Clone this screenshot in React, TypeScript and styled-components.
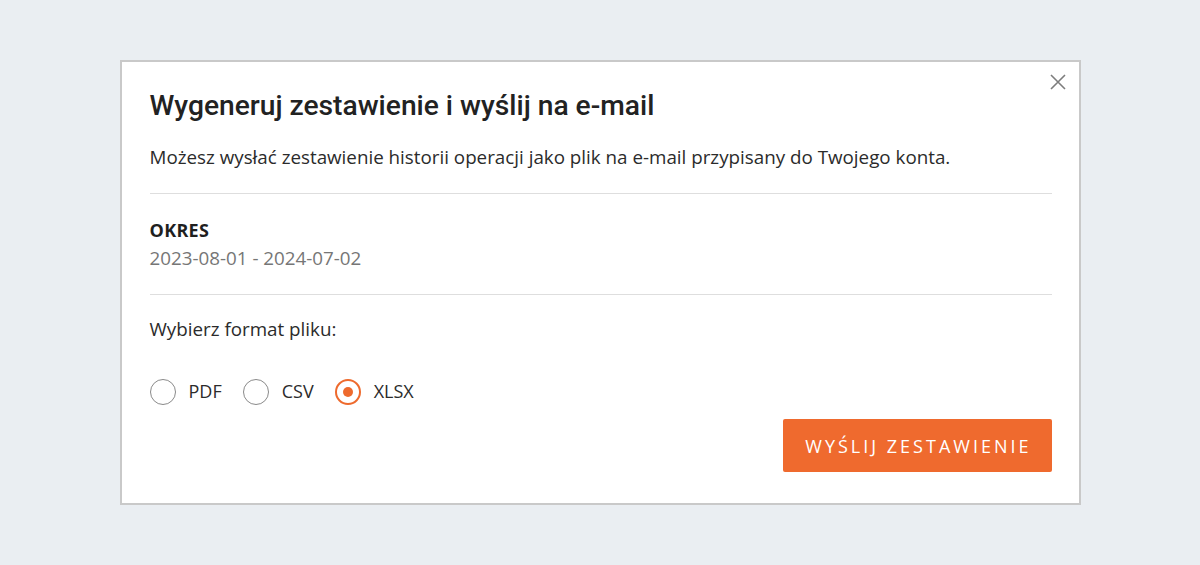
import React, { useState } from "react";
import styled, { createGlobalStyle } from "styled-components";

const GlobalStyle = createGlobalStyle`
  html, body {
    margin: 0;
    padding: 0;
    background: #eaeef2;
  }
  body {
    font-family: "Open Sans", "Liberation Sans", sans-serif;
    color: #2b2b2b;
  }
`;

const Page = styled.div`
  height: 565px;
  display: flex;
  align-items: center;
  justify-content: center;
`;

const Dialog = styled.div`
  position: relative;
  box-sizing: border-box;
  width: 961px;
  background: #fff;
  border: 2px solid #c9c9c9;
  padding: 27px 27px 31px 28px;
`;

const CloseButton = styled.button`
  position: absolute;
  top: 11px;
  right: 12px;
  width: 18px;
  height: 18px;
  padding: 0;
  border: 0;
  background: none;
  cursor: pointer;
  display: flex;
  align-items: center;
  justify-content: center;
`;

const Section = styled.div<{ $top?: number; $bottom?: number; $divider?: boolean }>`
  padding-top: ${(p) => p.$top ?? 0}px;
  padding-bottom: ${(p) => p.$bottom ?? 0}px;
  border-bottom: ${(p) => (p.$divider ? "1px solid #dedede" : "none")};
`;

const Title = styled.h2`
  margin: 0;
  font-family: Roboto, "Liberation Sans", sans-serif;
  font-weight: 500;
  font-size: 28.2px;
  line-height: 34px;
  color: #222;
`;

const Text = styled.p<{ $mt?: number; $muted?: boolean }>`
  margin: ${(p) => p.$mt ?? 0}px 0 0;
  font-size: 18.8px;
  line-height: 27px;
  color: ${(p) => (p.$muted ? "#767676" : "#2b2b2b")};
`;

const Label = styled.div`
  font-size: 18px;
  line-height: 27px;
  font-weight: 700;
  color: #1f1f1f;
  letter-spacing: 0.3px;
`;

const RadioRow = styled.div`
  display: flex;
  align-items: center;
  gap: 21px;
  margin-top: 35px;
  height: 27px;
`;

const RadioOption = styled.label`
  display: flex;
  align-items: center;
  gap: 13px;
  cursor: pointer;
  font-size: 18px;
  line-height: 27px;
  color: #2b2b2b;
`;

const RadioCircle = styled.span<{ $checked: boolean }>`
  box-sizing: border-box;
  width: 26px;
  height: 26px;
  border-radius: 50%;
  border: ${(p) => (p.$checked ? "2.5px solid #ee6a2d" : "1.5px solid #8a8a8a")};
  display: flex;
  align-items: center;
  justify-content: center;

  &::after {
    content: "";
    display: ${(p) => (p.$checked ? "block" : "none")};
    width: 10px;
    height: 10px;
    border-radius: 50%;
    background: #ee6a2d;
  }
`;

const Footer = styled.div`
  display: flex;
  justify-content: flex-end;
  margin-top: 14px;
`;

const SubmitButton = styled.button`
  height: 53px;
  padding: 0 20px 0 22px;
  border: 0;
  border-radius: 2px;
  background: #ef6a2e;
  color: #fff;
  font-family: "Open Sans", "Liberation Sans", sans-serif;
  font-size: 18px;
  letter-spacing: 3px;
  cursor: pointer;
`;

const formats = ["PDF", "CSV", "XLSX"];

export default function App() {
  const [format, setFormat] = useState("XLSX");

  return (
    <>
      <GlobalStyle />
      <Page>
        <Dialog>
          <CloseButton aria-label="Zamknij">
            <svg width="16" height="16" viewBox="0 0 16 16">
              <path d="M1 1 L15 15 M15 1 L1 15" stroke="#7d7d7d" strokeWidth="1.6" />
            </svg>
          </CloseButton>

          <Section $bottom={22} $divider>
            <Title>Wygeneruj zestawienie i wyślij na e-mail</Title>
            <Text $mt={21}>
              Możesz wysłać zestawienie historii operacji jako plik na e-mail przypisany do Twojego konta.
            </Text>
          </Section>

          <Section $top={23} $bottom={22} $divider>
            <Label>OKRES</Label>
            <Text $mt={1} $muted>
              2023-08-01 - 2024-07-02
            </Text>
          </Section>

          <Section $top={21}>
            <Text>Wybierz format pliku:</Text>
            <RadioRow>
              {formats.map((f) => (
                <RadioOption key={f} onClick={() => setFormat(f)}>
                  <RadioCircle $checked={format === f} />
                  {f}
                </RadioOption>
              ))}
            </RadioRow>
          </Section>

          <Footer>
            <SubmitButton>WYŚLIJ ZESTAWIENIE</SubmitButton>
          </Footer>
        </Dialog>
      </Page>
    </>
  );
}
